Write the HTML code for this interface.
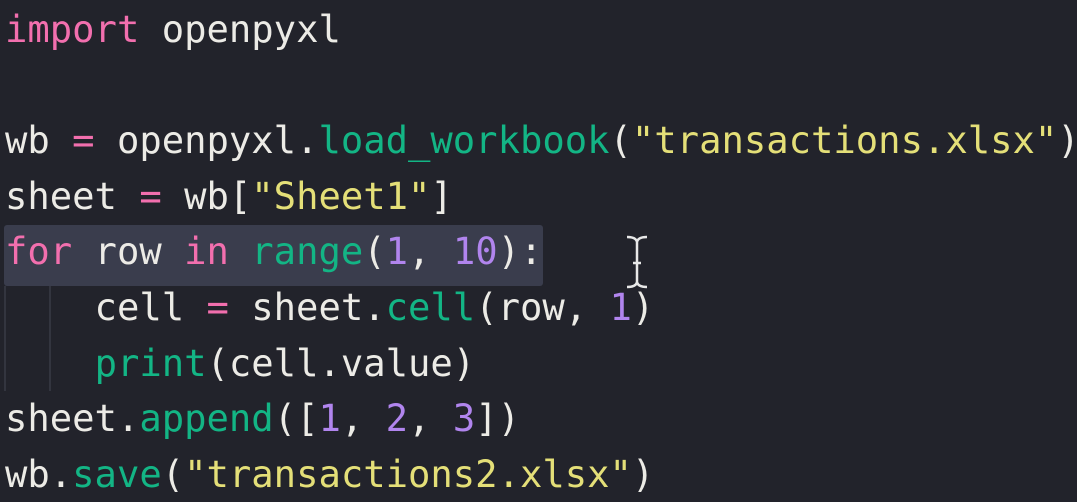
<!DOCTYPE html>
<html><head><style>
html,body{margin:0;padding:0;width:1077px;height:498px;overflow:hidden;background:#22232b;}
pre{position:absolute;left:5px;top:2px;margin:0;font-family:"DejaVu Sans Mono","Liberation Mono",monospace;font-size:37.2px;line-height:55.6px;color:#ecebe6;white-space:pre;}
.k{color:#f26fae}.f{color:#13b585}.s{color:#e4df78}.n{color:#b185ee}
.hl{position:absolute;left:4px;top:225px;width:539px;height:61px;background:#3a3d4d;border-radius:3px;}
.g{position:absolute;top:286px;width:2px;height:105px;background:#33353f;}
</style></head><body>
<div class="hl"></div>
<div class="g" style="left:4px"></div>
<div class="g" style="left:49px"></div>
<pre><span class="k">import</span> openpyxl

wb <span class="k">=</span> openpyxl.<span class="f">load_workbook</span>(<span class="s">"transactions.xlsx"</span>)
sheet <span class="k">=</span> wb[<span class="s">"Sheet1"</span>]
<span class="k">for</span> row <span class="k">in</span> <span class="f">range</span>(<span class="n">1</span>, <span class="n">10</span>):
    cell <span class="k">=</span> sheet.<span class="f">cell</span>(row, <span class="n">1</span>)
    <span class="f">print</span>(cell.value)
sheet.<span class="f">append</span>([<span class="n">1</span>, <span class="n">2</span>, <span class="n">3</span>])
wb.<span class="f">save</span>(<span class="s">"transactions2.xlsx"</span>)</pre>
<svg style="position:absolute;left:624px;top:234px" width="26" height="56" viewBox="0 0 26 56">
<path d="M3 3 Q12 3 13 8 Q14 3 23 3 M13 8 L13 48 Q12 53 3 53 M13 48 Q14 53 23 53 M9 29 L17 29" stroke="#e8e8e8" stroke-width="2.5" fill="none"/>
</svg>
</body></html>
